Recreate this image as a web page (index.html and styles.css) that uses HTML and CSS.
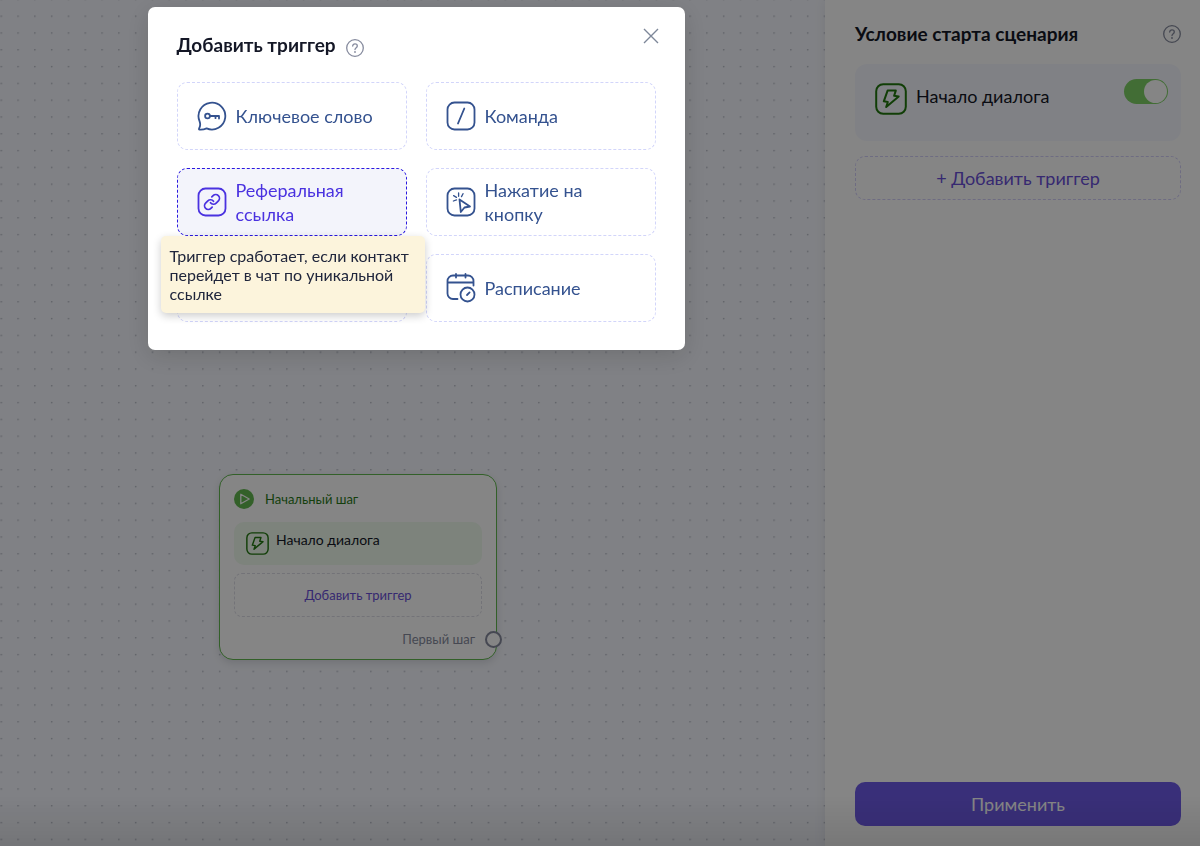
FILE: index.html
```html
<!DOCTYPE html>
<html lang="ru">
  <head>
    <meta charset="utf-8" />
    <meta name="viewport" content="width=device-width, initial-scale=1" />
    <title>Добавить триггер</title>
    <link rel="stylesheet" href="styles.css">
  </head>
  <body>
    <div class="layout">
      <main class="canvas">
        <svg class="grid" aria-hidden="true">
          <defs>
            <pattern id="dots" x="0.5" y="15.5" width="16.8" height="16.8" patternUnits="userSpaceOnUse">
              <circle cx="0.8" cy="0.8" r="0.8" fill="#a9adba" />
            </pattern>
          </defs>
          <rect width="100%" height="100%" fill="url(#dots)" />
        </svg>

        <section class="node">
          <header class="node-header">
            <svg class="node-play" viewBox="0 0 20 20">
              <circle cx="10" cy="10" r="10" fill="#62b94f" />
              <path d="M6.8 5.2v9.6l8.4-4.8z" fill="none" stroke="#fff" stroke-width="1.3" stroke-linejoin="round" />
            </svg>
            <span>Начальный шаг</span>
          </header>
          <div class="node-trigger">
            <svg class="bolt" viewBox="0 0 32 32">
              <rect x="1.2" y="1.2" width="29.6" height="29.6" rx="7" />
              <path d="M12.6 7.6h8.2l-1.7 5.2 4.6.6L11.2 24l1.6-5-4-.7z" />
            </svg>
            <span>Начало диалога</span>
          </div>
          <button class="node-add" type="button">Добавить триггер</button>
          <footer class="node-footer">Первый шаг</footer>
          <span class="node-port"></span>
        </section>
      </main>

      <aside class="panel">
        <header class="panel-header">
          <h2>Условие старта сценария</h2>
          <svg class="help" viewBox="0 0 18 18">
            <circle cx="9" cy="9" r="8.3" />
            <path d="M6.7 7.1c0-1.4 1-2.3 2.3-2.3s2.3.9 2.3 2.1c0 1.7-2.3 1.800-2.300 3.700" />
            <circle class="help-dot" cx="9" cy="13" r="0.9" />
          </svg>
        </header>

        <div class="trigger-card">
          <svg class="bolt" viewBox="0 0 32 32">
            <rect x="1.2" y="1.2" width="29.6" height="29.6" rx="7" />
            <path d="M12.6 7.6h8.2l-1.7 5.2 4.6.6L11.2 24l1.6-5-4-.7z" />
          </svg>
          <label for="start-toggle">Начало диалога</label>
          <input class="toggle" id="start-toggle" type="checkbox" checked />
        </div>

        <button class="add-trigger" type="button">+ Добавить триггер</button>
        <button class="apply" type="button">Применить</button>
      </aside>
    </div>

    <div class="overlay">
      <div class="modal" role="dialog" aria-labelledby="modal-title">
        <header class="modal-header">
          <h2 id="modal-title">Добавить триггер</h2>
          <svg class="help" viewBox="0 0 18 18">
            <circle cx="9" cy="9" r="8.3" />
            <path d="M6.7 7.1c0-1.4 1-2.3 2.3-2.3s2.3.9 2.3 2.1c0 1.7-2.3 1.8-2.3 3.7" />
            <circle class="help-dot" cx="9" cy="13" r="0.9" />
          </svg>
          <button class="close" type="button" aria-label="Закрыть">
            <svg viewBox="0 0 16 16"><path d="M1 1l14 14M15 1L1 15" /></svg>
          </button>
        </header>

        <div class="tiles">
          <button class="tile" type="button">
            <svg class="icon" viewBox="0 0 30 30">
              <path d="M2.6 20.4A13.4 13.4 0 1 1 9.6 27.4C7.600 28.300 5 28.800 2.600 28.600c-.7-.1-.9-.6-.5-1.2C3.400 25.200 3.400 22.600 2.600 20.400z" />
              <circle cx="10.500" cy="15" r="2.400" />
              <path d="M13 15h9v2.600M18.500 15v2.200" />
            </svg>
            <span>Ключевое слово</span>
          </button>

          <button class="tile" type="button">
            <svg class="icon" viewBox="0 0 30 30">
              <rect x="1.5" y="1.5" width="27" height="27" rx="7" />
              <path d="M18.3 7.5L12 22.5" />
            </svg>
            <span>Команда</span>
          </button>

          <div class="tile-wrap">
            <button class="tile tile-active" type="button" aria-describedby="tip">
              <svg class="icon" viewBox="0 0 30 30">
                <rect x="1.5" y="1.5" width="27" height="27" rx="7" />
                <g transform="translate(6 6) scale(0.75)" stroke-width="2.3">
                  <path d="M10 13a5 5 0 0 0 7.54.54l3-3a5 5 0 0 0-7.07-7.07l-1.72 1.71" />
                  <path d="M14 11a5 5 0 0 0-7.54-.54l-3 3a5 5 0 0 0 7.07 7.07l1.71-1.71" />
                </g>
              </svg>
              <span>Реферальная ссылка</span>
            </button>
            <div class="tooltip" id="tip" role="tooltip">
              Триггер сработает, если контакт перейдет в чат по уникальной ссылке
            </div>
          </div>

          <button class="tile" type="button">
            <svg class="icon" viewBox="0 0 30 30">
              <rect x="1.5" y="1.5" width="27" height="27" rx="7" />
              <path d="M13.5 12.5L24 19.500l-5.500 1-3.700 4.500z" />
              <path d="M12.600 6v3.300M17 6.700l-1.500 2.900M7.600 8.600l2.900 1.800M7.400 14l3.100-1.100" stroke-width="1.3" />
            </svg>
            <span>Нажатие на кнопку</span>
          </button>

          <button class="tile" type="button" aria-label="Другое"></button>

          <button class="tile" type="button">
            <svg class="icon" viewBox="0 0 30 30">
              <path d="M11.5 26H7a5.5 5.5 0 0 1-5.5-5.5V8A5.5 5.5 0 0 1 7 2.500h15A5.5 5.5 0 0 1 27.5 8v4.500M1.500 9.500h26M10 1v3.500M19.500 1v3.500" />
              <circle cx="21.5" cy="21.5" r="7" />
              <path d="M21 22l2.600-2.600" />
            </svg>
            <span>Расписание</span>
          </button>
        </div>
      </div>
    </div>
  </body>
</html>
```
FILE: styles.css
```css
* {
  box-sizing: border-box;
}

body {
  margin: 0;
  font-family: Lato, "Open Sans", sans-serif;
  color: #141726;
}

h2 {
  margin: 0;
  font-size: 19px;
  line-height: 28px;
  font-weight: 700;
}

button {
  padding: 0;
  font-family: inherit;
  cursor: pointer;
}

.layout {
  display: flex;
  min-height: 100vh;
}

/* canvas */
.canvas {
  flex: 1;
  position: relative;
  overflow: hidden;
  background: #f6f8ff;
}

.grid {
  position: absolute;
  width: 100%;
  height: 100%;
}

.node {
  position: absolute;
  left: 219px;
  top: 474px;
  width: 278px;
  padding: 14px 14px 10px;
  border: 1px solid #62b94f;
  border-radius: 14px;
  background: #fff;
  box-shadow: 0 3px 8px rgba(0, 0, 0, 0.12);
  font-size: 13px;
  line-height: 20px;
}

.node-header {
  display: flex;
  align-items: center;
  gap: 11px;
  color: #2a7a18;
}

.node-play {
  width: 20px;
  height: 20px;
}

.node-trigger {
  display: flex;
  gap: 7px;
  height: 43px;
  margin-top: 13px;
  padding: 8px 12px;
  border-radius: 10px;
  background: #effbee;
  font-size: 14px;
}

.bolt {
  flex: none;
  fill: none;
  stroke: #22780f;
  stroke-width: 2;
  stroke-linejoin: round;
}

.node-trigger .bolt {
  width: 23px;
  height: 23px;
  margin-top: 2px;
}

.node-add {
  width: 100%;
  height: 44px;
  margin-top: 8px;
  border: 1px dashed #dcdce6;
  border-radius: 8px;
  background: none;
  color: #6a50d8;
  font-size: 13px;
}

.node-footer {
  margin-top: 12px;
  padding: 0 7px;
  text-align: right;
  color: #868b9e;
}

.node-port {
  position: absolute;
  right: -6px;
  bottom: 11px;
  width: 17px;
  height: 17px;
  border: 2px solid #868b9e;
  border-radius: 50%;
  background: #fff;
}

/* side panel */
.panel {
  display: flex;
  flex-direction: column;
  width: 375px;
  padding: 20px 19px 20px 30px;
  position: relative;
  background: #fff;
  box-shadow: 0 0 12px rgba(0, 0, 0, 0.08);
}

.panel-header {
  display: flex;
  align-items: center;
  justify-content: space-between;
}

.help {
  width: 18px;
  height: 18px;
  fill: none;
  stroke: #868b9e;
  stroke-width: 1.3;
  stroke-linecap: round;
}

.help .help-dot {
  fill: #868b9e;
  stroke: none;
}

.trigger-card {
  display: flex;
  align-items: flex-start;
  height: 77px;
  margin-top: 16px;
  padding: 15px 13px 15px 20px;
  border-radius: 12px;
  background: #f6f8ff;
  font-size: 18px;
  line-height: 34px;
}

.trigger-card .bolt {
  width: 32px;
  height: 32px;
  margin-top: 4px;
}

.trigger-card label {
  flex: 1;
  margin-left: 9px;
}

.toggle {
  appearance: none;
  width: 44px;
  height: 25px;
  margin: 0;
  padding: 1px;
  border-radius: 13px;
  background: #7fd167;
  cursor: pointer;
}

.toggle::before {
  content: "";
  display: block;
  width: 23px;
  height: 23px;
  border-radius: 50%;
  background: #fff;
}

.toggle:checked::before {
  margin-left: auto;
}

.add-trigger {
  height: 44px;
  margin-top: 15px;
  border: 1px dashed #d3cffa;
  border-radius: 10px;
  background: none;
  color: #6a50d8;
  font-size: 18px;
}

.apply {
  height: 44px;
  margin-top: auto;
  border: none;
  border-radius: 10px;
  background: #6e5be8;
  color: #fff;
  font-size: 18px;
}

/* modal */
.overlay {
  position: fixed;
  inset: 0;
  display: flex;
  justify-content: center;
  align-items: flex-start;
  padding: 7px 368px 0 0;
  background: linear-gradient(transparent 94%, rgba(0, 0, 0, 0.1)) rgba(0, 0, 0, 0.48);
}

.modal {
  width: 537px;
  padding: 17px 29px 28px;
  border-radius: 7px;
  background: #fff;
  box-shadow: 0 6px 24px rgba(0, 0, 0, 0.15);
}

.modal-header {
  display: flex;
  align-items: center;
  height: 42px;
}

.modal-header .help {
  margin: 5px 0 0 10px;
}

.close {
  width: 24px;
  height: 24px;
  margin: 0 -7px 18px auto;
  border: none;
  background: none;
}

.close svg {
  display: block;
  width: 16px;
  height: 16px;
  margin: auto;
  fill: none;
  stroke: #7d8799;
  stroke-width: 1.4;
}

.tiles {
  display: grid;
  grid-template-columns: 1fr 1fr;
  gap: 18px 19px;
  margin-top: 16px;
}

.tile-wrap {
  position: relative;
}

.tile {
  display: flex;
  align-items: center;
  gap: 9px;
  width: 100%;
  height: 68px;
  padding: 0 30px 0 19px;
  border: 1px dashed #d2d5fa;
  border-radius: 10px;
  background: #fff;
  color: #34528f;
  font-size: 18px;
  line-height: 24px;
  text-align: left;
}

.tile-active {
  border-color: #2a18e0;
  background: #f3f4fb;
  color: #4a32e0;
}

.icon {
  flex: none;
  width: 30px;
  height: 30px;
  fill: none;
  stroke: currentColor;
  stroke-width: 1.8;
  stroke-linecap: round;
  stroke-linejoin: round;
}

.tooltip {
  position: absolute;
  top: 100%;
  left: -16px;
  right: -18px;
  z-index: 1;
  padding: 10px 9px;
  border-radius: 5px;
  background: #fcf4dc;
  box-shadow: 0 3px 8px rgba(0, 0, 0, 0.2);
  color: #20263c;
  font-size: 16px;
  line-height: 19px;
}
```
